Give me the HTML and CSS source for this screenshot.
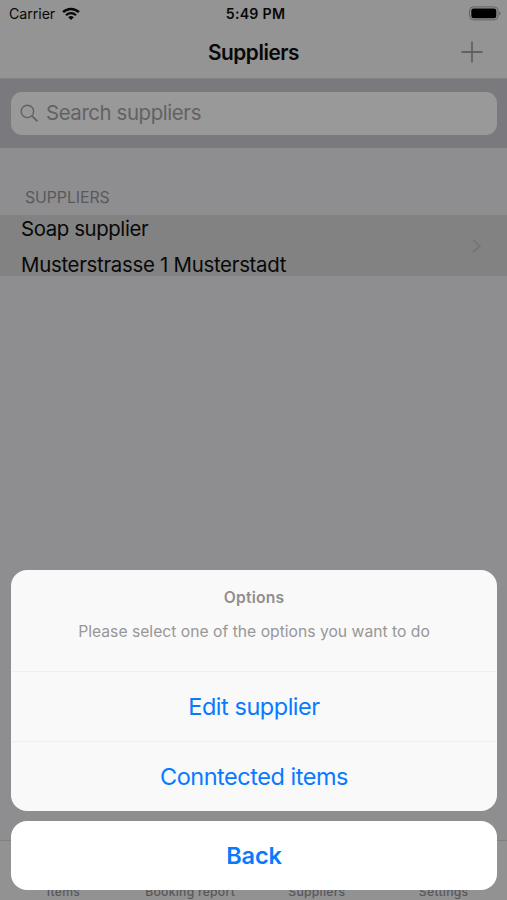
FILE: index.html
```html
<!DOCTYPE html>
<html lang="en">
<head>
<meta charset="utf-8">
<title>Suppliers</title>
<link rel="stylesheet" href="styles.css">
</head>
<body>
<div class="screen">
  <header class="header">
    <div class="status">
      <div class="carrier"><span>Carrier</span>
        <svg class="wifi" width="18" height="13" viewBox="0 0 18 13"><g fill="none" stroke="#080808" stroke-width="2.5"><path d="M1.1 5.1a11.3 11.3 0 0 1 15.8 0"/><path d="M4 8.200a7.2 7.2 0 0 1 10 0" stroke-width="2.2"/></g><path d="M6.200 10.300a4.2 4.2 0 0 1 5.6 0L9 12.9z" fill="#080808"/></svg>
      </div>
      <div class="time">5:49 PM</div>
      <svg class="battery" width="32" height="15" viewBox="0 0 32 15"><rect x=".6" y=".9" width="28.4" height="13" rx="3.8" fill="none" stroke="#626262" stroke-width="1"/><rect x="2.3" y="2.6" width="25" height="9.6" rx="2.2" fill="#000"/><path d="M30.1 5.2c1.9.7 1.9 3.7 0 4.4z" fill="#626262"/></svg>
    </div>
    <div class="navbar">
      <h1>Suppliers</h1>
      <svg class="add" width="22" height="22" viewBox="0 0 22 22"><path d="M11 .5v21M.5 11h21" stroke="#626262" stroke-width="1.8"/></svg>
    </div>
  </header>
  <div class="search">
    <div class="field">
      <svg width="19" height="19" viewBox="0 0 19 19"><g fill="none" stroke="#626264" stroke-width="1.4"><circle cx="7.4" cy="7.4" r="6.2"/><path d="M11.9 11.9l5.6 5.5" stroke-width="1.8"/></g></svg>
      <span>Search suppliers</span>
    </div>
  </div>
  <main>
    <h2><span>SUPPLIERS</span></h2>
    <div class="row">
      <div class="lines"><div><span class="name">Soap supplier</span></div><div><span class="address">Musterstrasse 1 Musterstadt</span></div></div>
      <svg width="10" height="16" viewBox="0 0 10 16"><path d="M1.2 1.800L7.800 8l-6.600 6.200" fill="none" stroke="#757577" stroke-width="1.9"/></svg>
    </div>
  </main>
  <nav class="tabs"><span>Items</span><span>Booking report</span><span>Suppliers</span><span>Settings</span></nav>
  <section class="sheet">
    <div class="options">
      <div class="intro"><h3>Options</h3><p>Please select one of the options you want to do</p></div>
      <div class="action edit"><span>Edit supplier</span></div>
      <div class="action connected"><span>Conntected items</span></div>
    </div>
    <div class="back"><span>Back</span></div>
  </section>
</div>
</body>
</html>
```
FILE: styles.css
```css
* { box-sizing: border-box; }
body { margin: 0; font-family: Inter, "Liberation Sans", sans-serif; }
h1, h2, h3, p { margin: 0; font-weight: 400; }
svg { display: block; flex: none; }
.screen { position: relative; width: 507px; height: 900px; overflow: hidden; background: #8e8e91; display: flex; flex-direction: column; color: #080808; }
.header { height: 79px; background: #949494; border-bottom: 1px solid #828284; }
.status { height: 27px; padding: 0 6px 0 9px; display: grid; grid-template-columns: 1fr auto 1fr; align-items: center; }
.carrier { display: flex; align-items: center; gap: 7px; font-size: 14.2px; letter-spacing: -0.05px; }
.time { font-size: 14.2px; font-weight: 600; letter-spacing: .25px; padding-left: 1px; }
.battery { justify-self: end; }
.navbar { height: 50px; padding: 0 24px; display: grid; grid-template-columns: 22px 1fr 22px; align-items: center; }
.navbar h1 { grid-column: 2; text-align: center; font-size: 20.8px; font-weight: 600; letter-spacing: -0.45px; }
.search { height: 69px; padding: 13px 10px 13px 11px; background: #79797e; }
.field { height: 43px; border-radius: 11px; background: #999; color: #626264; padding-left: 9px; display: flex; align-items: center; gap: 7px; font-size: 20.4px; letter-spacing: -0.4px; }
.field span { padding-bottom: 2px; }
main { flex: 1; }
h2 { height: 67px; padding: 40px 0 0 25px; font-size: 15.9px; line-height: 20px; letter-spacing: -0.1px; color: #59595c; }
.row { height: 61px; background: #828282; display: flex; align-items: center; justify-content: space-between; padding: 0 25px 0 21px; }
.lines { font-size: 20.4px; line-height: 36px; color: #080808; padding-top: 2px; }
.name { letter-spacing: -0.4px; }
.address { letter-spacing: -0.28px; }
.tabs { height: 60px; border-top: 1px solid #808080; background: #929292; display: grid; grid-template-columns: repeat(4, 1fr); align-items: end; text-align: center; font-size: 12.2px; line-height: 16px; font-weight: 500; letter-spacing: .25px; color: #58585a; }
.sheet { position: absolute; left: 11px; right: 10px; bottom: 10px; display: flex; flex-direction: column; gap: 10px; text-align: center; }
.options { height: 241px; border-radius: 16px; background: #f9f9f9; }
.intro { height: 101px; padding-top: 18px; color: #8f8f8f; font-size: 15.7px; line-height: 20px; }
.intro h3 { font-size: 15.7px; font-weight: 600; letter-spacing: .2px; }
.intro p { margin-top: 14px; color: #979797; }
.action { height: 70px; border-top: 1px solid #f0f0f1; line-height: 69px; font-size: 23.5px; letter-spacing: -0.47px; color: #087aff; }
.back { height: 69px; border-radius: 16px; background: #fff; line-height: 70px; font-size: 23.5px; font-weight: 600; letter-spacing: -0.1px; color: #087aff; }
```
